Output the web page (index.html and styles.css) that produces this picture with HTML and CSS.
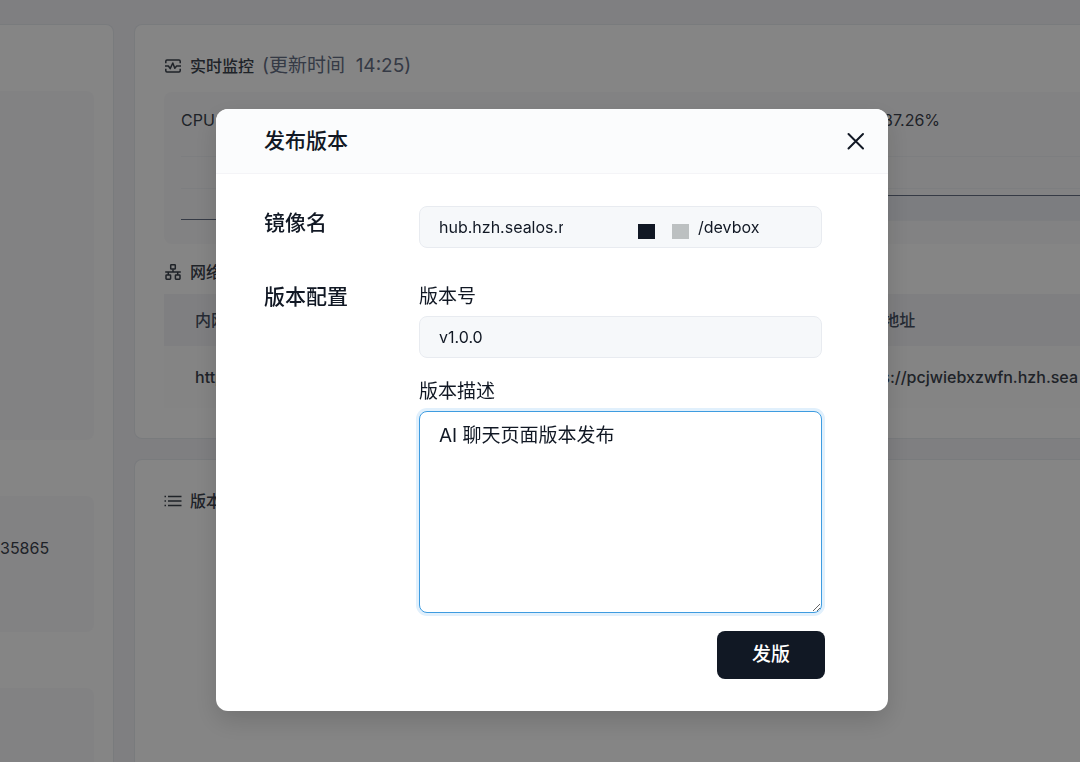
FILE: index.html
```
<!DOCTYPE html>
<html lang="zh-CN">
<head>
    <meta charset="UTF-8">
    <title>DevBox</title>
    <meta name="viewport" content="width=device-width,initial-scale=1">
    <link rel="stylesheet" href="styles.css">
</head>
<body>
    <div class="page">
        <!-- 基础信息 -->
        <aside class="side card">
            <div class="panel panel-info"></div>
            <div class="panel panel-port">35865</div>
            <div class="panel panel-more"></div>
        </aside>

        <main class="main">
            <section class="card card-monitor">
                <h2 class="title">
                    <svg class="icon" viewBox="0 0 18 18" fill="none" stroke="currentColor" stroke-width="1.5" stroke-linejoin="round"><path d="M1.8 6.3V4.2Q1.8 3 3 3h12q1.2 0 1.2 1.2v2.1M1.8 11.7v2.1Q1.8 15 3 15h12q1.2 0 1.2-1.2v-2.1"/><path d="M1 9h3.4l1.8 2.6L8.8 6l2 5.2L12.6 9H17"/></svg>
                    实时监控
                    <span class="sub-title">(更新时间&nbsp; 14:25)</span>
                </h2>
                <div class="panel charts">
                    <div class="chart">
                        <p class="chart-name">CPU</p>
                        <svg class="chart-draw" viewBox="0 0 100 66" preserveAspectRatio="none">
                            <path class="grid" d="M0 1.5H100M0 33.5H100"/>
                            <path class="line" d="M0 64.5H100"/>
                        </svg>
                    </div>
                    <div class="chart">
                        <p class="chart-name">内存: 87.26%</p>
                        <svg class="chart-draw" viewBox="0 0 100 66" preserveAspectRatio="none">
                            <path class="area" d="M0 41H100V65H0Z"/>
                            <path class="grid" d="M0 1.5H100M0 33.5H100M0 65.5H100"/>
                            <path class="line" d="M0 40.5H100"/>
                        </svg>
                    </div>
                </div>

                <h2 class="title">
                    <svg class="icon" viewBox="0 0 18 18" fill="none" stroke="currentColor" stroke-width="1.5" stroke-linejoin="round"><rect x="6.7" y="1.7" width="4.6" height="4.4" rx=".6"/><rect x="2" y="12" width="4.6" height="4.2" rx=".6"/><rect x="11.4" y="12" width="4.6" height="4.2" rx=".6"/><path d="M9 6.2V9M1.2 9h15.6M4.3 9v3M13.7 9v3"/></svg>
                    网络
                </h2>
                <table class="network">
                    <thead>
                        <tr><th>内网地址</th><th>外网地址</th></tr>
                    </thead>
                    <tbody>
                        <tr><td>http://</td><td>https://pcjwiebxzwfn.hzh.sea</td></tr>
                    </tbody>
                </table>
            </section>

            <section class="card card-version">
                <h2 class="title">
                    <svg class="icon" viewBox="0 0 18 18" fill="none" stroke="currentColor" stroke-width="1.5"><path d="M4 4.5H17.5M4 9H17.5M4 13.5H17.5M.5 4.5H2M.5 9H2M.5 13.5H2"/></svg>
                    版本
                </h2>
            </section>
        </main>
    </div>

    <!-- 发布版本弹窗 -->
    <div class="overlay">
        <form class="modal" role="dialog" aria-labelledby="modal-title">
            <header class="modal-header">
                <h1 class="modal-title" id="modal-title">发布版本</h1>
                <button type="button" class="close-btn" aria-label="关闭">
                    <svg viewBox="0 0 18 18" width="18" height="18" fill="none" stroke="currentColor" stroke-width="2" stroke-linecap="round"><path d="M1.5 2l14.500 14.500M16 2L1.500 16.500"/></svg>
                </button>
            </header>
            <div class="modal-body">
                <label class="group-name" for="image-name">镜像名</label>
                <div class="input image-name">
                    <input type="text" id="image-name" value="hub.hzh.sealos.run" readonly>
                    <span class="mask"></span>
                    <span class="mask mask-light"></span>
                    <span>/devbox</span>
                </div>

                <div class="group-name">版本配置</div>
                <div class="fields">
                    <label for="tag">版本号</label>
                    <input class="input" type="text" id="tag" value="v1.0.0">
                    <label for="desc">版本描述</label>
                    <textarea class="input" id="desc" spellcheck="false">AI 聊天页面版本发布</textarea>
                </div>
            </div>
            <footer class="modal-footer">
                <button type="submit" class="submit-btn">发版</button>
            </footer>
        </form>
    </div>
</body>
</html>
```
FILE: styles.css
```
* {box-sizing:border-box;}
html, body {height:100%;margin:0;}
body {overflow:hidden;background:#f3f3f7;color:#3c434e;font-family:Inter,"Noto Sans CJK SC",sans-serif;font-size:16px;line-height:24px;}
h1, h2, p {margin:0;}
input, textarea, button {font:inherit;color:inherit;}

/* page */
.page {display:flex;gap:20px;height:100%;padding-top:24px;}
.card {background:#fff;border:1px solid #e8ebf0;border-radius:8px;}
.panel {background:#fafafb;border-radius:8px;}
.side {display:flex;flex-direction:column;flex:none;width:114px;gap:56px;padding:66px 19px 0 0;border-left:0;border-bottom:0;border-radius:0 8px 0 0;}
.panel-info {flex:none;height:349px;border-radius:0 8px 8px 0;}
.panel-port {flex:none;height:136px;padding-top:40px;border-radius:0 8px 8px 0;}
.panel-more {flex:1;border-radius:0 8px 0 0;}

.main {display:flex;flex-direction:column;flex:1;min-width:0;gap:20px;}
.main .card {padding:29px 0 30px 29px;border-right:0;border-radius:8px 0 0 8px;}
.main .card-version {flex:1;border-bottom:0;border-radius:8px 0 0 0;}
.title {display:flex;align-items:center;gap:8px;font-size:16px;font-weight:500;line-height:24px;}
.title .icon {flex:none;width:18px;height:18px;}
.title .sub-title {color:#667085;font-size:19px;font-weight:400;}
.charts {display:grid;grid-template-columns:641fr 238fr;gap:20px;height:152px;margin:14px 0 16px;padding:16px 0 0 17px;border-radius:8px 0 0 8px;}
.chart-draw {display:block;width:100%;height:66px;margin-top:23px;}
.grid {fill:none;stroke:#f0f2f5;}
.line {fill:none;stroke:#667085;}
.area {fill:#eef0f6;}

.network {width:100%;margin-top:10px;border-collapse:collapse;table-layout:fixed;}
.network th, .network td {padding:14px 0 14px 31px;font-weight:500;text-align:left;white-space:nowrap;}
.network th {background:#f4f4f7;color:#485264;}
.network td {padding-top:19px;padding-bottom:19px;background:#fdfdfd;}
.network th:first-child {width:71%;}
.network th + th, .network td + td {padding-left:37px;}

/* modal */
.overlay {position:fixed;inset:0;padding:109px 0 0 24px;background:rgba(0,0,0,.48);}
.modal {max-width:672px;margin:0 auto;overflow:hidden;background:#fff;border-radius:12px;color:#111824;box-shadow:0 10px 24px rgba(0,0,0,.15);}
.modal-header {display:flex;align-items:center;justify-content:space-between;height:65px;padding:0 17px 0 48px;background:#fbfcfd;border-bottom:1px solid #f4f4f7;}
.modal-title {font-size:21px;font-weight:500;}
.close-btn {display:flex;padding:6px;border:0;background:none;}
.modal-body {display:grid;grid-template-columns:155px 1fr;row-gap:32px;padding:32px 66px 0 48px;}
.group-name {font-size:21px;font-weight:500;line-height:34px;}
.fields {display:flex;flex-direction:column;}
.fields label {margin-bottom:2px;font-size:19px;line-height:34px;}
.input {width:100%;height:42px;padding:0 19px;background:#f6f8fa;border:1px solid #e8ebf0;border-radius:8px;outline:0;}
.image-name {display:flex;align-items:center;gap:17px;}
.image-name input {width:124px;margin-right:58px;padding:0;border:0;background:none;outline:0;}
.image-name .mask {width:17px;height:15px;margin-top:8px;background:#111824;}
.image-name .mask-light {background:#bcc0c1;}
.image-name span:last-child {margin-left:-8px;}
#tag {margin-bottom:17px;}
#desc {height:202px;padding:8px 19px;background:#fff;border-color:#3e9ce0;box-shadow:0 0 0 3px #e1f0fc;font-size:19px;line-height:32px;resize:vertical;}
.modal-footer {display:flex;justify-content:flex-end;padding:18px 63px 32px;}
.submit-btn {width:108px;height:48px;padding:0;border:0;border-radius:8px;background:#111824;color:#fff;font-size:19px;font-weight:500;}
```
